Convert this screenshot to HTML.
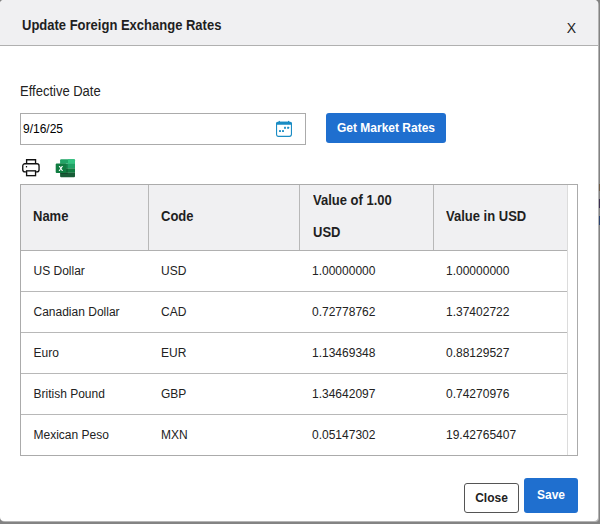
<!DOCTYPE html>
<html><head><meta charset="utf-8">
<style>
html,body{margin:0;padding:0;}
body{width:600px;height:524px;overflow:hidden;background:#838383;position:relative;font-family:"Liberation Sans",sans-serif;}
.dlg{position:absolute;left:0;top:0;width:598px;height:521px;background:#fff;border-radius:4px;overflow:hidden;box-shadow:1px 1px 0 0 #b4b4b4;}
.hdr{position:absolute;left:0;top:0;width:598px;height:45px;background:#f0f0f2;border-bottom:1px solid #b0b0b0;}
.abs{position:absolute;white-space:nowrap;}
.s13{font-size:14px;transform:scaleX(0.92857);transform-origin:0 0;line-height:16px;}
.title{left:22px;top:17px;font-weight:bold;color:#1f1f1f;}
.x{left:566.7px;top:20px;font-size:14px;color:#222;line-height:16px;}
.lbl{left:20px;top:83px;color:#222;}
.inp{left:20px;top:113px;width:284px;height:30px;border:1px solid #ababab;}
.inptxt{left:23px;top:122px;font-size:12px;color:#000;line-height:14px;}
.btn{position:absolute;background:#1f6fcf;color:#fff;font-weight:bold;font-size:12px;border-radius:3px;text-align:center;}
.tbl{left:20px;top:184px;width:556px;height:270px;border:1px solid #ababab;}
.th{position:absolute;top:0;height:65px;background:#f0f0f2;border-bottom:1px solid #b0b0b0;}
.vd{position:absolute;top:0;width:1px;height:65px;background:#b8b8b8;}
.ht{position:absolute;font-weight:bold;color:#1f1f1f;white-space:nowrap;}
.rb{position:absolute;left:0;width:546px;height:1px;background:#b8b8b8;}
.td{position:absolute;font-size:12px;color:#222;line-height:14px;white-space:nowrap;}
</style></head><body>
<div style="position:absolute;left:599px;top:184px;width:1px;height:7px;background:#6e5a44"></div>
<div style="position:absolute;left:599px;top:199px;width:1px;height:9px;background:#3c3050"></div>
<div style="position:absolute;left:599px;top:216px;width:1px;height:9px;background:#2c4470"></div>
<div class="dlg">
  <div class="hdr"></div>
  <div class="abs s13 title">Update Foreign Exchange Rates</div>
  <div class="abs x">X</div>
  <div class="abs s13 lbl">Effective Date</div>
  <div class="abs inp"></div>
  <div class="abs inptxt">9/16/25</div>
  <svg class="abs" style="left:276px;top:120px" width="16" height="17" viewBox="0 0 16 17">
    <rect x="0.55" y="2.35" width="14.9" height="14" rx="2" fill="none" stroke="#1a8cc4" stroke-width="1.1"/>
    <path d="M0 4.8 V3.8 a2 2 0 0 1 2 -2 H14 a2 2 0 0 1 2 2 V4.8 Z" fill="#1a8cc4"/>
    <rect x="2.8" y="0.9" width="1.1" height="1.5" fill="#1a8cc4"/>
    <rect x="12" y="0.9" width="1.1" height="1.5" fill="#1a8cc4"/>
    <rect x="8" y="6.8" width="2" height="2" rx="0.4" fill="#1a8cc4"/>
    <rect x="11.1" y="6.8" width="2" height="2" rx="0.4" fill="#1a8cc4"/>
    <rect x="3" y="10" width="2" height="2" rx="0.4" fill="#1a8cc4"/>
    <rect x="6" y="10" width="2" height="2" rx="0.4" fill="#1a8cc4"/>
  </svg>
  <div class="btn" style="left:326px;top:113px;width:120px;height:30px;line-height:30px;">Get Market Rates</div>

  <!-- printer -->
  <svg class="abs" style="left:22px;top:159px" width="18" height="18" viewBox="0 0 18 18">
    <path d="M4.6 4.6 V0.75 H13.55 V4.6" fill="none" stroke="#111" stroke-width="1.35"/>
    <path d="M4.6 12.85 H2.9 a2.15 2.15 0 0 1 -2.15 -2.15 V6.9 a2.15 2.15 0 0 1 2.15 -2.15 H14.9 a2.15 2.15 0 0 1 2.15 2.15 V10.7 a2.15 2.15 0 0 1 -2.15 2.15 H13.55" fill="none" stroke="#111" stroke-width="1.35"/>
    <rect x="4.6" y="11.85" width="8.95" height="4.8" fill="none" stroke="#111" stroke-width="1.35"/>
    <rect x="3.9" y="7" width="1.2" height="1.4" fill="#111"/>
  </svg>
  <!-- excel -->
  <svg class="abs" style="left:55px;top:159px" width="21" height="19" viewBox="0 0 21 19">
    <path d="M5.1 1.3 a1 1 0 0 1 1 -1 H19 a1 1 0 0 1 1 1 V4.8 H5.1 Z" fill="#21a366"/>
    <path d="M13 0.3 H19 a1 1 0 0 1 1 1 V4.8 H13 Z" fill="#33c481"/>
    <rect x="5.1" y="4.8" width="14.9" height="4.5" fill="#21a366"/>
    <rect x="5.1" y="9.3" width="14.9" height="4.5" fill="#107c41"/>
    <path d="M5.1 13.8 H20 V17.2 a1 1 0 0 1 -1 1 H6.1 a1 1 0 0 1 -1 -1 Z" fill="#185c37"/>
    <rect x="5.1" y="5" width="7.7" height="10" fill="#000" opacity="0.2"/>
    <rect x="0.7" y="4.4" width="10.6" height="9.6" rx="1" fill="#107c41"/>
    <path d="M3.7 6.9 H4.95 L5.85 8.5 L6.75 6.9 H8.0 L6.5 9.4 L8.1 12.0 H6.85 L5.85 10.3 L4.85 12.0 H3.6 L5.2 9.4 Z" fill="#fff"/>
  </svg>

  <div class="abs tbl">
    <div class="th" style="left:0;width:546px;"></div>
    <div class="vd" style="left:127px"></div>
    <div class="vd" style="left:278px"></div>
    <div class="vd" style="left:412px"></div>
    <div style="position:absolute;left:546px;top:0;width:1px;height:270px;background:#dcdcdc;"></div>
    <div class="ht s13" style="left:12px;top:23px;">Name</div>
    <div class="ht s13" style="left:140px;top:23px;">Code</div>
    <div class="ht s13" style="left:291.5px;top:-1px;line-height:32px;">Value of 1.00<br>USD</div>
    <div class="ht s13" style="left:425px;top:23px;">Value in USD</div>

    <div class="rb" style="top:106px"></div>
    <div class="rb" style="top:147px"></div>
    <div class="rb" style="top:188px"></div>
    <div class="rb" style="top:229px"></div>

    <div class="td" style="left:12.5px;top:79px">US Dollar</div>
    <div class="td" style="left:140px;top:79px">USD</div>
    <div class="td" style="left:291px;top:79px">1.00000000</div>
    <div class="td" style="left:425px;top:79px">1.00000000</div>

    <div class="td" style="left:12.5px;top:120px">Canadian Dollar</div>
    <div class="td" style="left:140px;top:120px">CAD</div>
    <div class="td" style="left:291px;top:120px">0.72778762</div>
    <div class="td" style="left:425px;top:120px">1.37402722</div>

    <div class="td" style="left:12.5px;top:161px">Euro</div>
    <div class="td" style="left:140px;top:161px">EUR</div>
    <div class="td" style="left:291px;top:161px">1.13469348</div>
    <div class="td" style="left:425px;top:161px">0.88129527</div>

    <div class="td" style="left:12.5px;top:202px">British Pound</div>
    <div class="td" style="left:140px;top:202px">GBP</div>
    <div class="td" style="left:291px;top:202px">1.34642097</div>
    <div class="td" style="left:425px;top:202px">0.74270976</div>

    <div class="td" style="left:12.5px;top:243px">Mexican Peso</div>
    <div class="td" style="left:140px;top:243px">MXN</div>
    <div class="td" style="left:291px;top:243px">0.05147302</div>
    <div class="td" style="left:425px;top:243px">19.42765407</div>
  </div>

  <div class="abs" style="left:464px;top:483px;width:53px;height:28px;border:1px solid #555;border-radius:3px;background:#fff;font-size:12px;font-weight:bold;color:#222;text-align:center;line-height:28px;">Close</div>
  <div class="btn" style="left:524px;top:478px;width:54px;height:35px;line-height:35px;">Save</div>
</div>
</body></html>
